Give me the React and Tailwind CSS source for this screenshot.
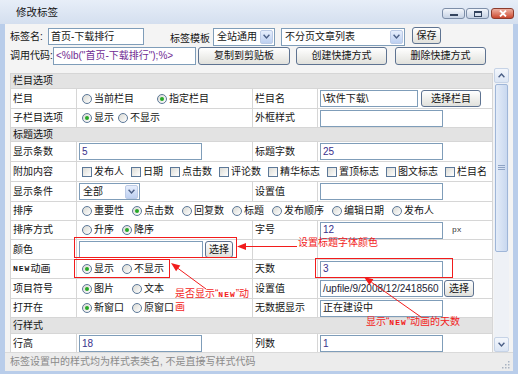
import React from 'react';

function Box({ className = '', children }) {
  return (
    <div className={'flex h-[17px] items-center overflow-hidden whitespace-nowrap border border-[#7f9db9] bg-white px-[2px] ' + className}>
      {children}
    </div>
  );
}

function Btn({ className = '', children }) {
  return (
    <div className={'flex h-[17px] items-center justify-center rounded-[3px] border border-[#5e7391] bg-gradient-to-b from-white to-[#e1e1dc] ' + className}>
      {children}
    </div>
  );
}

function Select({ className = '', value }) {
  return (
    <div className={'flex items-center justify-between border border-[#7f9db9] bg-white pl-[3px] pr-[1px] ' + className}>
      <span>{value}</span>
      <span className="flex h-[14px] w-[13px] items-center justify-center rounded-[2px] border border-[#bccbe6] bg-gradient-to-b from-[#e6eefc] to-[#bdd0f1]">
        <svg width="7" height="5" viewBox="0 0 7 5">
          <path d="M0.6 0.8 L3.5 3.9 L6.4 0.8" fill="none" stroke="#4b5f86" strokeWidth="1.4" />
        </svg>
      </span>
    </div>
  );
}

function Radio({ checked, label }) {
  return (
    <span className="flex items-center gap-[2px] whitespace-nowrap">
      <span className="flex h-[10px] w-[10px] items-center justify-center rounded-full border border-[#5c7898] bg-gradient-to-br from-[#d9d9d3] to-white">
        {checked && <span className="h-[4px] w-[4px] rounded-full bg-[#27a827]" />}
      </span>
      <span>{label}</span>
    </span>
  );
}

function Check({ label }) {
  return (
    <span className="flex items-center gap-[2px] whitespace-nowrap">
      <span className="h-[10px] w-[10px] border border-[#5c7898] bg-gradient-to-br from-[#dcdcd6] to-white" />
      <span>{label}</span>
    </span>
  );
}

function Row({ h, children }) {
  return <div className={'grid grid-cols-[66px_176px_65px_175px] border-b border-[#d6d6d6] ' + h}>{children}</div>;
}

function Cell({ className = '', children }) {
  return <div className={'flex items-center overflow-hidden border-r border-[#d6d6d6] ' + className}>{children}</div>;
}

function Head({ h, children }) {
  return (
    <div className={'flex items-center border-b border-r border-[#d6d6d6] bg-[#e3e3e3] pl-[2px] ' + h}>{children}</div>
  );
}

const New = () => <span className="font-['Liberation_Mono',monospace] text-[8px] font-bold tracking-[1px]">NEW</span>;

export default function App() {
  return (
    <div className="relative h-[374px] w-[518px] overflow-hidden bg-[#b9cdea] font-['Liberation_Sans','Noto_Sans_CJK_SC',sans-serif] text-[10px] leading-none text-[#141414]">
      {/* title bar */}
      <div className="flex h-[24px] justify-between bg-gradient-to-b from-[#e7eef8] to-[#d4dfef] pl-[16px] pr-[4px]">
        <span className="self-center text-[10.5px]">修改标签</span>
        <div className="mt-[8px] flex gap-[1px]">
          <div className="flex h-[11px] w-[23px] items-end justify-center rounded-[3px] border border-[#7d8ea8] bg-gradient-to-b from-[#f3f6fb] to-[#c6d2e4] pb-[2px]">
            <span className="h-[2px] w-[8px] bg-[#34445e]" />
          </div>
          <div className="flex h-[11px] w-[23px] items-center justify-center rounded-[3px] border border-[#7d8ea8] bg-gradient-to-b from-[#f3f6fb] to-[#c6d2e4]">
            <span className="h-[6px] w-[8px] border border-t-2 border-[#34445e]" />
          </div>
          <div className="ml-[1px] flex h-[11px] w-[23px] items-center justify-center rounded-[3px] border border-[#8c3b2d] bg-gradient-to-b from-[#eeb1a3] to-[#c9452d]">
            <svg width="8" height="7" viewBox="0 0 8 7">
              <path d="M1 0.5 L7 6.5 M7 0.5 L1 6.5" stroke="white" strokeWidth="1.8" />
            </svg>
          </div>
        </div>
      </div>

      <div className="flex h-[347px]">
        <div className="w-[5px]" />
        <div className="flex w-[508px] flex-col bg-[#f4f4f4]">
          {/* top form rows */}
          <div className="mt-[3px] flex h-[19px] items-center pl-[5px]">
            <span className="w-[38px]">标签名:</span>
            <Box className="w-[96px]">首页-下载排行</Box>
            <span className="ml-[26px] w-[43px] self-end pb-[2px]">标签模板</span>
            <Select className="h-[18px] w-[62px]" value="全站通用" />
            <Select className="ml-[6px] h-[18px] w-[124px]" value="不分页文章列表" />
            <Btn className="ml-[7px] w-[29px] self-start">保存</Btn>
          </div>
          <div className="mt-[1px] flex h-[18px] items-center pl-[5px]">
            <span className="w-[43px]">调用代码:</span>
            <Box className="h-[18px] w-[143px] text-[#702c93]">&lt;%lb("首页-下载排行");%&gt;</Box>
            <Btn className="ml-[2px] h-[18px] w-[92px]">复制到剪贴板</Btn>
            <Btn className="ml-[6px] h-[18px] w-[91px]">创建快捷方式</Btn>
            <Btn className="ml-[8px] h-[18px] w-[91px]">删除快捷方式</Btn>
          </div>

          {/* scrolling table */}
          <div className="mt-[3px] flex h-[284px]">
            <div className="w-[489px] overflow-hidden pl-[5px] pt-[5px]">
              <div className="w-[483px] border-l border-t border-[#d6d6d6] bg-white">
                <Head h="h-[15px]">栏目选项</Head>
                <Row h="h-[20px]">
                  <Cell className="pl-[2px]">栏目</Cell>
                  <Cell className="gap-[23px] pl-[5px]">
                    <Radio label="当前栏目" />
                    <Radio checked label="指定栏目" />
                  </Cell>
                  <Cell className="pl-[2px]">栏目名</Cell>
                  <Cell className="gap-[3px] pl-[2px]">
                    <Box className="w-[98px]">\软件下载\</Box>
                    <Btn className="w-[60px]">选择栏目</Btn>
                  </Cell>
                </Row>
                <Row h="h-[19px]">
                  <Cell className="pl-[2px]">子栏目选项</Cell>
                  <Cell className="gap-[4px] pl-[5px]">
                    <Radio checked label="显示" />
                    <Radio label="不显示" />
                  </Cell>
                  <Cell className="pl-[2px]">外框样式</Cell>
                  <Cell className="pl-[2px]">
                    <Box className="w-[123px]" />
                  </Cell>
                </Row>
                <Head h="h-[14px]">标题选项</Head>
                <Row h="h-[20px]">
                  <Cell className="pl-[2px]">显示条数</Cell>
                  <Cell className="pl-[2px]">
                    <Box className="w-[123px] text-[#3a2f8c]">5</Box>
                  </Cell>
                  <Cell className="pl-[2px]">标题字数</Cell>
                  <Cell className="pl-[2px]">
                    <Box className="w-[123px] text-[#3a2f8c]">25</Box>
                  </Cell>
                </Row>
                <Row h="h-[20px]">
                  <Cell className="pl-[2px]">附加内容</Cell>
                  <Cell className="col-span-3 gap-[7px] pl-[5px]">
                    <Check label="发布人" />
                    <Check label="日期" />
                    <Check label="点击数" />
                    <Check label="评论数" />
                    <Check label="精华标志" />
                    <Check label="置顶标志" />
                    <Check label="图文标志" />
                    <Check label="栏目名" />
                  </Cell>
                </Row>
                <Row h="h-[20px]">
                  <Cell className="pl-[2px]">显示条件</Cell>
                  <Cell className="pl-[2px]">
                    <Select className="h-[17px] w-[61px]" value="全部" />
                  </Cell>
                  <Cell className="pl-[2px]">设置值</Cell>
                  <Cell className="pl-[2px]">
                    <Box className="w-[123px]" />
                  </Cell>
                </Row>
                <Row h="h-[19px]">
                  <Cell className="pl-[2px]">排序</Cell>
                  <Cell className="col-span-3 gap-[8px] pl-[5px]">
                    <Radio label="重要性" />
                    <Radio checked label="点击数" />
                    <Radio label="回复数" />
                    <Radio label="标题" />
                    <Radio label="发布顺序" />
                    <Radio label="编辑日期" />
                    <Radio label="发布人" />
                  </Cell>
                </Row>
                <Row h="h-[19px]">
                  <Cell className="pl-[2px]">排序方式</Cell>
                  <Cell className="gap-[8px] pl-[5px]">
                    <Radio label="升序" />
                    <Radio checked label="降序" />
                  </Cell>
                  <Cell className="pl-[2px]">字号</Cell>
                  <Cell className="gap-[9px] pl-[2px]">
                    <Box className="w-[123px] text-[#3a2f8c]">12</Box>
                    <span className="font-['Liberation_Mono',monospace] text-[8px] text-[#333]">px</span>
                  </Cell>
                </Row>
                <Row h="h-[20px]">
                  <Cell className="pl-[2px]">颜色</Cell>
                  <Cell className="gap-[2px] pl-[2px]">
                    <Box className="w-[124px]" />
                    <Btn className="w-[28px]">选择</Btn>
                  </Cell>
                  <Cell className="pl-[2px]" />
                  <Cell className="pl-[2px]" />
                </Row>
                <Row h="h-[19px]">
                  <Cell className="pl-[2px]">
                    <New />
                    动画
                  </Cell>
                  <Cell className="gap-[8px] pl-[5px]">
                    <Radio checked label="显示" />
                    <Radio label="不显示" />
                  </Cell>
                  <Cell className="pl-[2px]">天数</Cell>
                  <Cell className="pl-[2px]">
                    <Box className="w-[123px] text-[#3a2f8c]">3</Box>
                  </Cell>
                </Row>
                <Row h="h-[20px]">
                  <Cell className="pl-[2px]">项目符号</Cell>
                  <Cell className="gap-[18px] pl-[5px]">
                    <Radio checked label="图片" />
                    <Radio label="文本" />
                  </Cell>
                  <Cell className="pl-[2px]">设置值</Cell>
                  <Cell className="gap-[1px] pl-[2px]">
                    <Box className="w-[123px] text-[#223]">/upfile/9/2008/12/2418560</Box>
                    <Btn className="w-[30px]">选择</Btn>
                  </Cell>
                </Row>
                <Row h="h-[19px]">
                  <Cell className="pl-[2px]">打开在</Cell>
                  <Cell className="gap-[8px] pl-[5px]">
                    <Radio checked label="新窗口" />
                    <Radio label="原窗口" />
                  </Cell>
                  <Cell className="pl-[2px]">无数据显示</Cell>
                  <Cell className="pl-[2px]">
                    <Box className="w-[123px]">正在建设中</Box>
                  </Cell>
                </Row>
                <Head h="h-[16px]">行样式</Head>
                <Row h="h-[20px]">
                  <Cell className="pl-[2px]">行高</Cell>
                  <Cell className="pl-[2px]">
                    <Box className="w-[123px] text-[#3a2f8c]">18</Box>
                  </Cell>
                  <Cell className="pl-[2px]">列数</Cell>
                  <Cell className="pl-[2px]">
                    <Box className="w-[123px] text-[#3a2f8c]">1</Box>
                  </Cell>
                </Row>
              </div>
            </div>

            {/* scrollbar */}
            <div className="flex w-[15px] flex-col bg-[#eef1f6]">
              <div className="flex h-[15px] items-center justify-center rounded-[2px] border border-[#c6d3e6] bg-gradient-to-b from-[#f4f7fc] to-[#dbe5f4]">
                <svg width="7" height="5" viewBox="0 0 7 5">
                  <path d="M0.6 4.2 L3.5 1.1 L6.4 4.2" fill="none" stroke="#4b5f86" strokeWidth="1.4" />
                </svg>
              </div>
              <div className="mx-[1px] mt-[1px] flex h-[168px] items-center justify-center rounded-[2px] border border-[#9fb6d8] bg-gradient-to-r from-[#e4ecf8] to-[#c9d8ef]">
                <svg width="7" height="6" viewBox="0 0 7 6">
                  <path d="M0 0.5 H7 M0 2.5 H7 M0 4.5 H7" stroke="#8ea3c4" strokeWidth="1" />
                </svg>
              </div>
              <div className="flex-1" />
              <div className="flex h-[15px] items-center justify-center rounded-[2px] border border-[#c6d3e6] bg-gradient-to-b from-[#f4f7fc] to-[#dbe5f4]">
                <svg width="7" height="5" viewBox="0 0 7 5">
                  <path d="M0.6 0.8 L3.5 3.9 L6.4 0.8" fill="none" stroke="#4b5f86" strokeWidth="1.4" />
                </svg>
              </div>
            </div>
            <div className="w-[4px]" />
          </div>

          {/* footer */}
          <div className="flex h-[19px] items-center justify-between border-t border-[#dadada] bg-[#ececec] pl-[5px] pr-[3px] text-[#8a8a8a]">
            <span>标签设置中的样式均为样式表类名, 不是直接写样式代码</span>
            <svg className="self-end mb-[2px]" width="9" height="9" viewBox="0 0 9 9">
              <g fill="#a9b3c2">
                <rect x="7" y="1" width="1.5" height="1.5" />
                <rect x="4" y="4" width="1.5" height="1.5" />
                <rect x="7" y="4" width="1.5" height="1.5" />
                <rect x="1" y="7" width="1.5" height="1.5" />
                <rect x="4" y="7" width="1.5" height="1.5" />
                <rect x="7" y="7" width="1.5" height="1.5" />
              </g>
            </svg>
          </div>
        </div>
      </div>

      {/* red annotations */}
      <div className="absolute left-[74px] top-[237px] h-[21px] w-[163px] border border-[#f21c1c]" />
      <div className="absolute left-[74px] top-[259px] h-[19px] w-[96px] border border-[#f21c1c]" />
      <div className="absolute left-[315px] top-[258px] h-[20px] w-[138px] border border-[#f21c1c]" />
      <svg className="pointer-events-none absolute left-0 top-0" width="518" height="374" viewBox="0 0 518 374">
        <g stroke="#f21c1c" strokeWidth="1" fill="#f21c1c">
          <path d="M297 246.5 H245" />
          <polygon points="237,246.5 246,243 246,250" stroke="none" />
          <path d="M206 289 L178 268.4" />
          <polygon points="171,263 180.3,265.6 176.1,271.2" stroke="none" />
          <path d="M421 317 L371.4 282.2" />
          <polygon points="364,277 373.4,279.3 369.4,285.1" stroke="none" />
        </g>
      </svg>
      <span className="absolute left-[298px] top-[238px] text-[#f21c1c]">设置标题字体颜色</span>
      <span className="absolute left-[175px] top-[288px] leading-[12px] text-[#f21c1c]">
        是否显示“<New />”动
        <br />
        画
      </span>
      <span className="absolute left-[366px] top-[317px] text-[#f21c1c]">
        显示“<New />”动画的天数
      </span>
    </div>
  );
}
